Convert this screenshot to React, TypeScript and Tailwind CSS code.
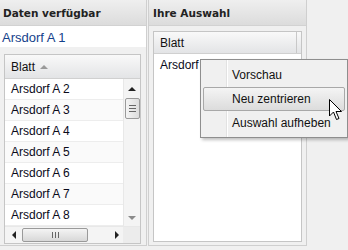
import React from "react";

const rows = ["Arsdorf A 2", "Arsdorf A 3", "Arsdorf A 4", "Arsdorf A 5", "Arsdorf A 6", "Arsdorf A 7", "Arsdorf A 8"];

function Tri({ dir, color = "#222" }: { dir: "up" | "down" | "left" | "right"; color?: string }) {
  const pts =
    dir === "up" ? "0,4 4,0 8,4" : dir === "down" ? "0,0 8,0 4,4" : dir === "left" ? "4,0 4,8 0,4" : "0,0 0,8 4,4";
  const w = dir === "up" || dir === "down" ? 8 : 4;
  const h = dir === "up" || dir === "down" ? 4 : 8;
  return (
    <svg width={w} height={h} viewBox={`0 0 ${w} ${h}`}>
      <polygon points={pts} fill={color} />
    </svg>
  );
}

export default function App() {
  return (
    <div
      className="relative w-[348px] h-[250px] overflow-hidden bg-[#f0f0f0]"
      style={{ fontFamily: '"Liberation Sans", Arial, sans-serif' }}
    >
      <div className="flex h-[246px]">
        {/* Left panel */}
        <div className="w-[147px] h-full flex flex-col border-r border-b border-[#cfcfcf]">
          <div
            className="h-[26px] shrink-0 border-b border-[#d2d2d2] bg-gradient-to-b from-[#efefef] to-[#dcdcdc] pl-[3px] pt-[6px] text-[10.5px] font-bold text-[#222]"
            style={{ fontFamily: '"DejaVu Sans", Verdana, sans-serif' }}
          >
            Daten verfügbar
          </div>
          <div className="h-[21px] shrink-0 bg-white pl-[2px] pt-[2px] text-[13px] text-[#15428b]">Arsdorf A 1</div>
          <div className="flex-1 px-[4px] pt-[7px] pb-[3px] flex">
            <div className="flex-1 flex flex-col border border-[#c5c5c5] bg-white mr-[1px]">
              <div className="h-[24px] shrink-0 flex items-center gap-[5px] pl-[6px] border-b border-[#d0d0d0] bg-gradient-to-b from-[#f9f9f9] to-[#e3e4e6] text-[12px] text-[#111]">
                Blatt
                <Tri dir="up" color="#9a9a9a" />
              </div>
              <div className="flex-1 flex overflow-hidden">
                <div className="flex-1 overflow-hidden">
                  {rows.map((r, i) => (
                    <div
                      key={r}
                      className={`h-[21px] shrink-0 flex items-center pl-[6px] border-b border-[#ededed] text-[12px] text-[#0a0a1a] ${
                        i % 2 === 1 ? "bg-[#fafafa]" : "bg-white"
                      }`}
                    >
                      {r}
                    </div>
                  ))}
                </div>
                <div className="w-[17px] shrink-0 bg-[#f4f4f4] border-l border-[#e8e8e8] flex flex-col items-center">
                  <div className="h-[17px] flex items-center justify-center pt-[2px]">
                    <Tri dir="up" color="#222" />
                  </div>
                  <div className="w-[15px] h-[21px] mt-[2px] rounded-[2px] border border-[#9a9a9a] bg-gradient-to-r from-[#f4f4f4] to-[#dcdcdc] flex flex-col items-center justify-center gap-[2px]">
                    <div className="w-[7px] h-px bg-[#666]" />
                    <div className="w-[7px] h-px bg-[#666]" />
                    <div className="w-[7px] h-px bg-[#666]" />
                  </div>
                  <div className="flex-1" />
                  <div className="h-[16px] flex items-center justify-center">
                    <Tri dir="down" color="#8a8a8a" />
                  </div>
                </div>
              </div>
              <div className="h-[17px] shrink-0 flex bg-[#f4f4f4] border-t border-[#e8e8e8]">
                <div className="flex-1 flex items-center">
                  <div className="w-[17px] flex justify-center">
                    <Tri dir="left" color="#222" />
                  </div>
                  <div className="w-[66px] h-[14px] rounded-[2px] border border-[#9a9a9a] bg-gradient-to-b from-[#f4f4f4] to-[#d8d8d8] flex items-center justify-center gap-[2px]">
                    <div className="w-px h-[6px] bg-[#666]" />
                    <div className="w-px h-[6px] bg-[#666]" />
                    <div className="w-px h-[6px] bg-[#666]" />
                  </div>
                  <div className="flex-1" />
                  <div className="w-[12px] flex justify-center">
                    <Tri dir="right" color="#222" />
                  </div>
                </div>
                <div className="w-[17px] bg-[#ececec]" />
              </div>
            </div>
          </div>
        </div>
        {/* Right panel */}
        <div className="ml-px w-[159px] h-[246px] flex flex-col border-l border-r border-b border-[#cfcfcf]">
          <div
            className="h-[26px] shrink-0 border-b border-[#d2d2d2] bg-gradient-to-b from-[#efefef] to-[#dcdcdc] pl-[4px] pt-[6px] text-[10.5px] font-bold text-[#222]"
            style={{ fontFamily: '"DejaVu Sans", Verdana, sans-serif' }}
          >
            Ihre Auswahl
          </div>
          <div className="flex-1 px-[4px] pt-[5px] pb-[3px] flex">
            <div className="flex-1 flex flex-col border border-[#c5c5c5] bg-white">
              <div className="h-[22px] shrink-0 flex border-b border-[#d0d0d0] bg-gradient-to-b from-[#f9f9f9] to-[#e3e4e6] text-[12px] text-[#111]">
                <div className="flex-1 flex items-center pl-[6px] border-r border-[#c8c8c8]">Blatt</div>
                <div className="w-[4px]" />
              </div>
              <div className="h-[22px] flex items-center pl-[6px] text-[12px] text-[#0a0a1a] bg-white">Arsdorf A 1</div>
            </div>
          </div>
        </div>
      </div>

      {/* Context menu */}
      <div className="absolute left-[200px] top-[59px] w-[148px] h-[79px] border border-[#8e8e8e] bg-[#f0f0f0] shadow-[2px_2px_3px_rgba(0,0,0,0.25)] text-[12px] text-[#111]">
        <div className="absolute left-[25px] top-0 bottom-0 w-px bg-[#e2e2e2]" />
        <div className="absolute left-[26px] top-0 bottom-0 w-px bg-white" />
        <div className="relative flex flex-col pt-[3px]">
          <div className="h-[24px] flex items-center pl-[31px]">Vorschau</div>
          <div className="mx-[2px] h-[24px] flex items-center pl-[28px] rounded-[2px] border border-[#a8a8a8] bg-gradient-to-b from-[#f4f4f4] to-[#dcdcdc]">
            Neu zentrieren
          </div>
          <div className="h-[24px] flex items-center pl-[31px]">Auswahl aufheben</div>
        </div>
      </div>

      {/* Cursor */}
      <svg className="absolute left-[329px] top-[99px]" width="14" height="22" viewBox="0 0 14 22">
        <path d="M0.5 0.5 L0.5 17 L4.5 13 L7.5 20.5 L10 19.5 L7 12.5 L12.5 12.5 Z" fill="white" stroke="black" strokeWidth="1" />
      </svg>
    </div>
  );
}
